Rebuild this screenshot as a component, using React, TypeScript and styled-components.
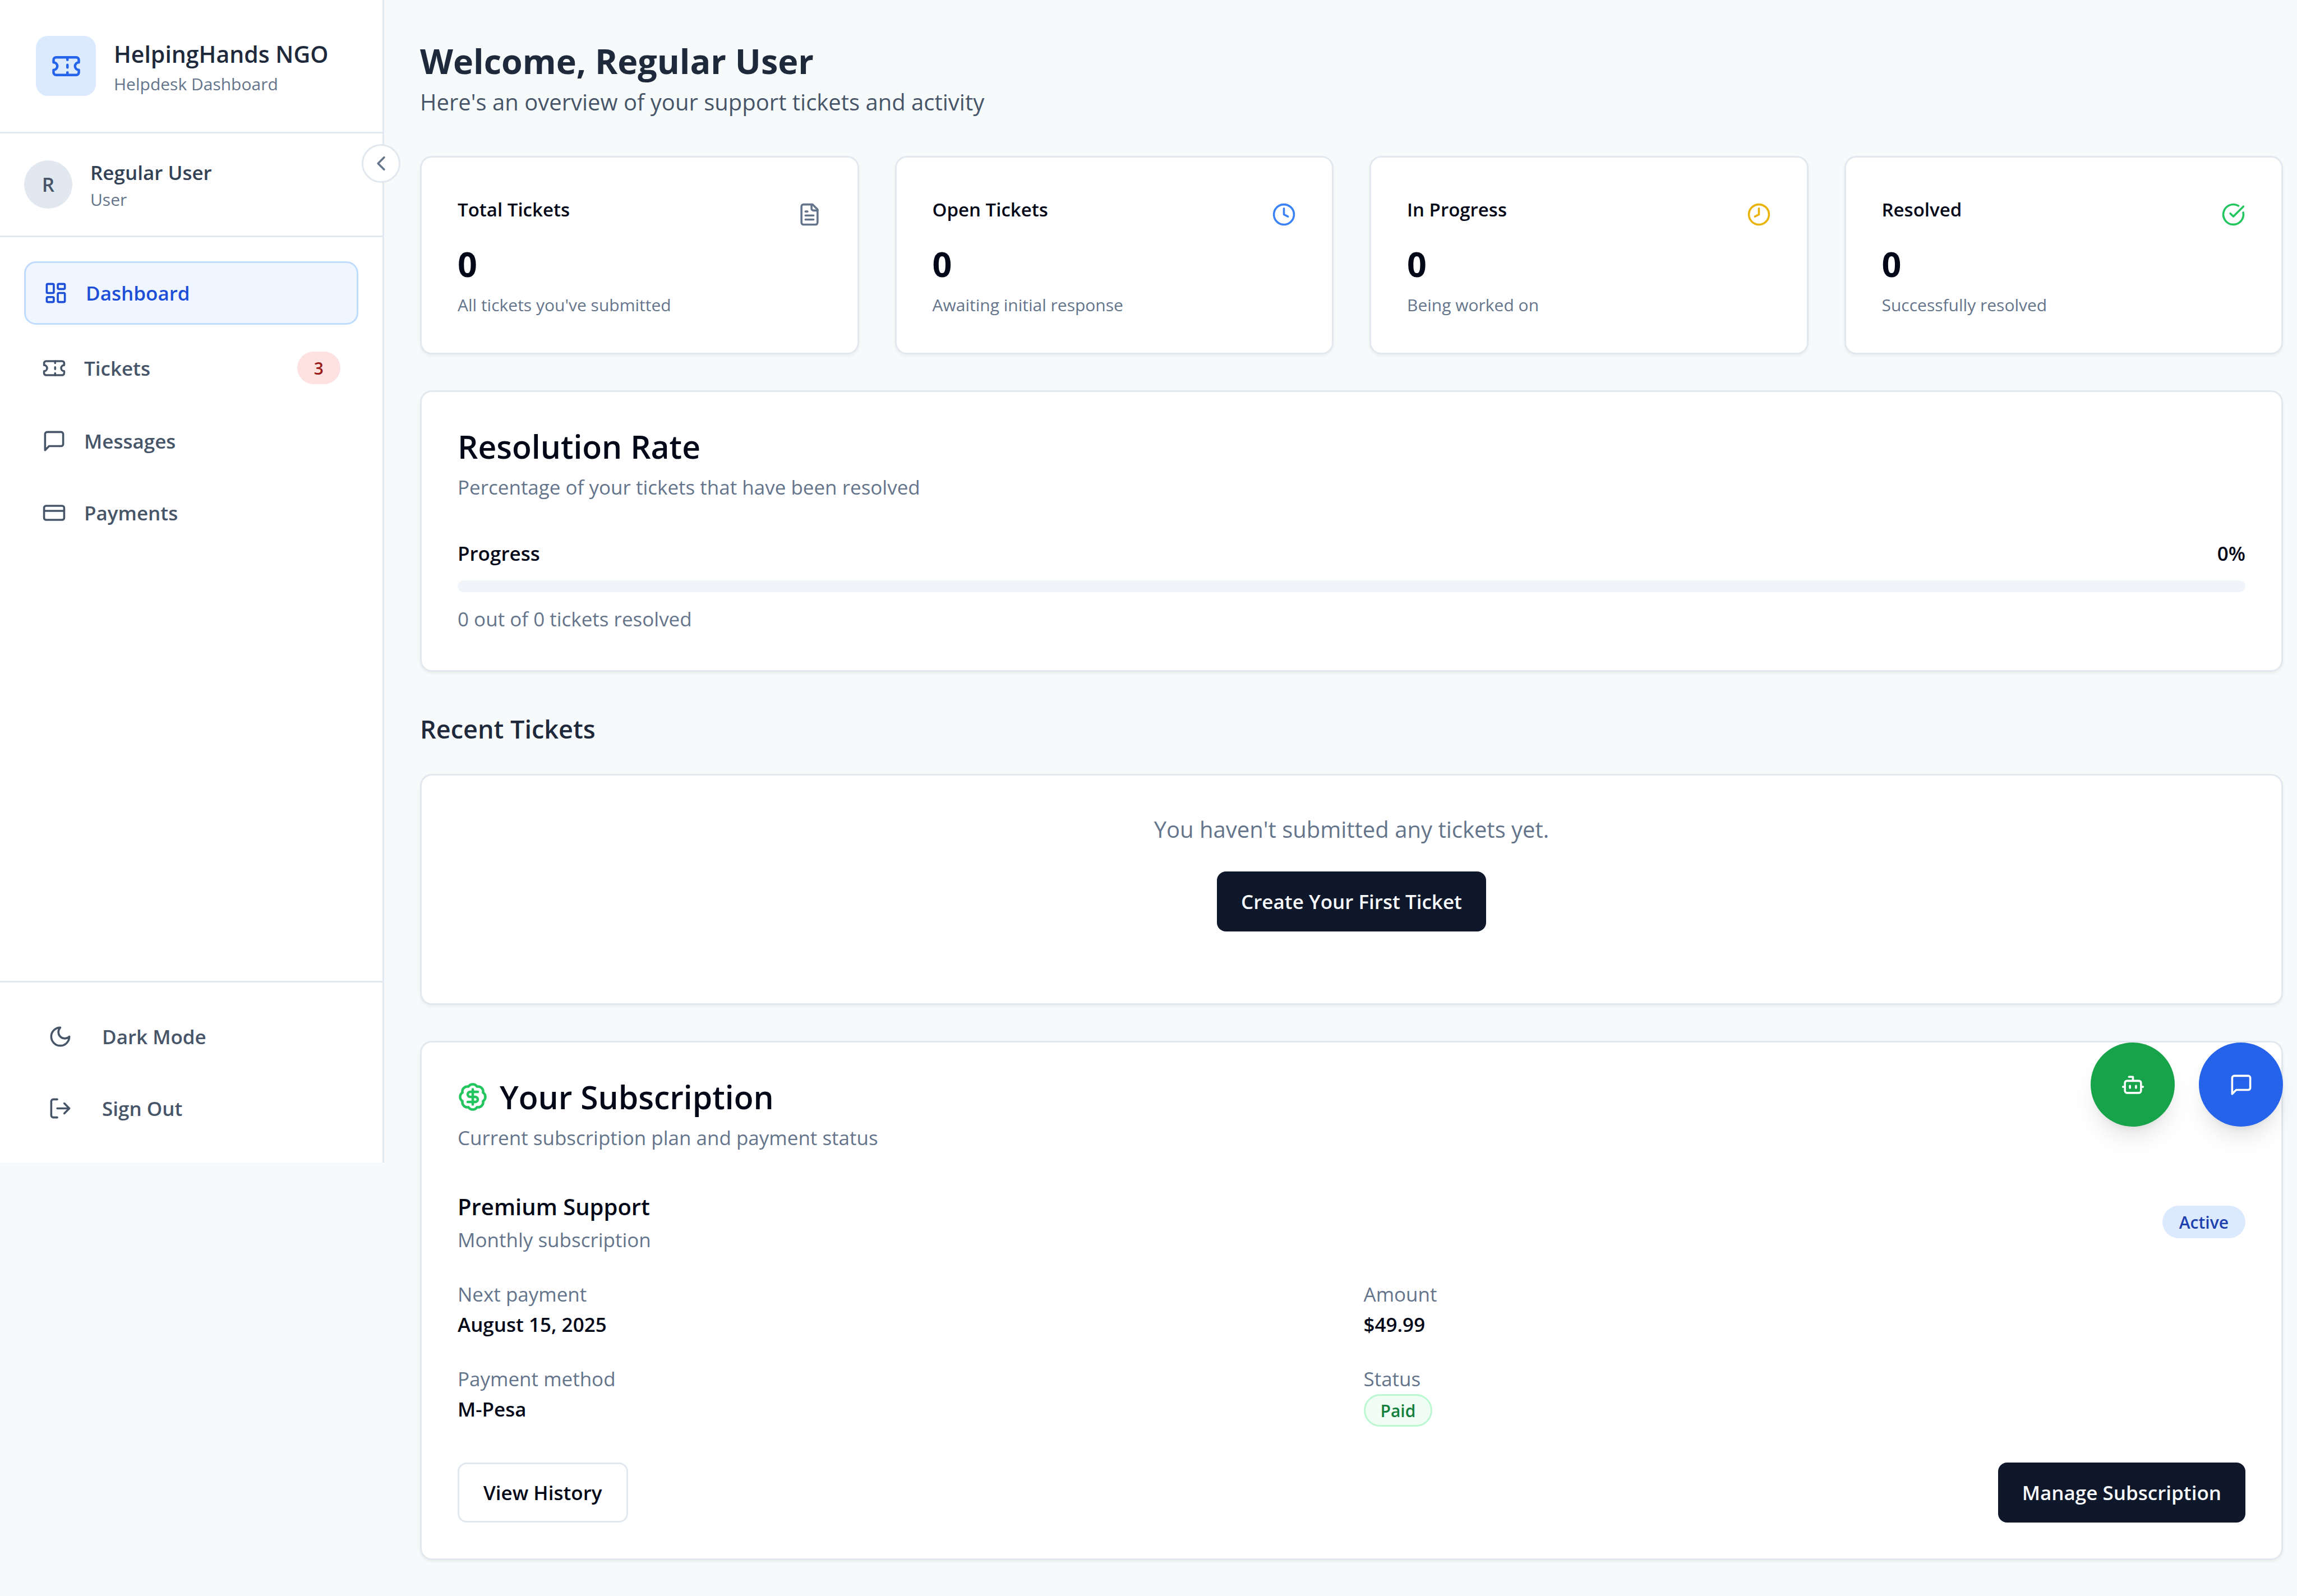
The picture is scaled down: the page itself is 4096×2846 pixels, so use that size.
import React from "react";
import styled, { createGlobalStyle } from "styled-components";

const border = "#e2e8f0";
const foreground = "#020817";
const muted = "#64748b";
const slate = "#475569";

const GlobalStyle = createGlobalStyle`
  *, *::before, *::after { box-sizing: border-box; }
  body {
    margin: 0;
    background: #f7fafb;
    color: ${foreground};
    font-family: "Open Sans", "Noto Sans", sans-serif;
    font-size: 35px;
    line-height: 54px;
  }
  h1, h2, h3, p, ul, dl, dd { margin: 0; padding: 0; }
  ul { list-style: none; }
  button { font: inherit; cursor: pointer; }
`;

/* ---------- icons ---------- */

const Svg = styled.svg<{ $size: number; $color?: string }>`
  flex: none;
  display: block;
  width: ${(p) => p.$size}px;
  height: ${(p) => p.$size}px;
  color: ${(p) => p.$color ?? "inherit"};
  fill: none;
  stroke: currentColor;
  stroke-width: 2;
  stroke-linecap: round;
  stroke-linejoin: round;
`;

const shapes = {
  ticket: (
    <>
      <path d="M2 9a3 3 0 0 1 0 6v2a2 2 0 0 0 2 2h16a2 2 0 0 0 2-2v-2a3 3 0 0 1 0-6V7a2 2 0 0 0-2-2H4a2 2 0 0 0-2 2Z" />
      <path d="M13 5v2M13 17v2M13 11v2" />
    </>
  ),
  dashboard: (
    <>
      <rect width="7" height="9" x="3" y="3" rx="1" />
      <rect width="7" height="5" x="14" y="3" rx="1" />
      <rect width="7" height="9" x="14" y="12" rx="1" />
      <rect width="7" height="5" x="3" y="16" rx="1" />
    </>
  ),
  message: <path d="M21 15a2 2 0 0 1-2 2H7l-4 4V5a2 2 0 0 1 2-2h14a2 2 0 0 1 2 2z" />,
  card: (
    <>
      <rect width="20" height="14" x="2" y="5" rx="2" />
      <path d="M2 10h20" />
    </>
  ),
  moon: <path d="M12 3a6 6 0 0 0 9 9 9 9 0 1 1-9-9Z" />,
  logout: (
    <>
      <path d="M9 21H5a2 2 0 0 1-2-2V5a2 2 0 0 1 2-2h4" />
      <path d="m16 17 5-5-5-5M21 12H9" />
    </>
  ),
  chevron: <path d="m15 18-6-6 6-6" />,
  file: (
    <>
      <path d="M15 2H6a2 2 0 0 0-2 2v16a2 2 0 0 0 2 2h12a2 2 0 0 0 2-2V7Z" />
      <path d="M14 2v4a2 2 0 0 0 2 2h4M10 9H8M16 13H8M16 17H8" />
    </>
  ),
  clock4: (
    <>
      <circle cx="12" cy="12" r="10" />
      <path d="M12 6v6l4 2" />
    </>
  ),
  clock8: (
    <>
      <circle cx="12" cy="12" r="10" />
      <path d="M12 6v6l-4 2" />
    </>
  ),
  check: (
    <>
      <path d="M21.801 10A10 10 0 1 1 17 3.335" />
      <path d="m9 11 3 3L22 4" />
    </>
  ),
  dollar: (
    <>
      <path d="M3.85 8.62a4 4 0 0 1 4.78-4.77 4 4 0 0 1 6.74 0 4 4 0 0 1 4.78 4.78 4 4 0 0 1 0 6.74 4 4 0 0 1-4.77 4.78 4 4 0 0 1-6.75 0 4 4 0 0 1-4.78-4.77 4 4 0 0 1 0-6.76Z" />
      <path d="M16 8h-6a2 2 0 1 0 0 4h4a2 2 0 1 1 0 4H8M12 18V6" />
    </>
  ),
  bot: (
    <>
      <path d="M12 8V4H8" />
      <rect width="16" height="12" x="4" y="8" rx="2" />
      <path d="M2 14h2M20 14h2M15 13v2M9 13v2" />
    </>
  ),
};

type IconName = keyof typeof shapes;

const Icon = ({ name, size = 43, color }: { name: IconName; size?: number; color?: string }) => (
  <Svg viewBox="0 0 24 24" aria-hidden="true" $size={size} $color={color}>
    {shapes[name]}
  </Svg>
);

/* ---------- sidebar ---------- */

const Shell = styled.div`
  display: flex;
  align-items: flex-start;
  min-height: 100vh;
`;

const Sidebar = styled.aside`
  position: relative;
  flex: none;
  width: 685px;
  background: #fff;
  border-right: 3px solid ${border};
`;

const Brand = styled.div`
  display: flex;
  align-items: center;
  gap: 32px;
  padding: 64px;
  border-bottom: 3px solid ${border};
`;

const BrandMark = styled.div`
  display: grid;
  place-items: center;
  width: 107px;
  height: 107px;
  border-radius: 21px;
  background: #dbeafe;
  color: #2563eb;
`;

const BrandName = styled.h2`
  font-size: 41px;
  line-height: 64px;
  font-weight: 600;
  color: #1e293b;
  white-space: nowrap;
`;

const SmallText = styled.p`
  font-size: 30px;
  line-height: 43px;
  color: ${muted};
`;

const Profile = styled.div`
  display: flex;
  align-items: center;
  gap: 32px;
  padding: 43px;
  border-bottom: 3px solid ${border};
`;

const Avatar = styled.div`
  display: grid;
  place-items: center;
  width: 86px;
  height: 86px;
  border-radius: 50%;
  background: ${border};
  color: ${slate};
  font-weight: 600;
`;

const ProfileName = styled.p`
  line-height: 53px;
  font-weight: 600;
  color: #334155;
`;

const CollapseButton = styled.button`
  position: absolute;
  top: 257px;
  right: -32px;
  display: grid;
  place-items: center;
  width: 69px;
  height: 69px;
  padding: 0;
  border: 3px solid ${border};
  border-radius: 50%;
  background: #fff;
  color: ${muted};
`;

const Nav = styled.nav`
  min-height: 1326px;
  padding: 43px;
`;

const NavList = styled.ul`
  display: flex;
  flex-direction: column;
  gap: 21px;
`;

const NavLink = styled.a<{ $active?: boolean }>`
  display: flex;
  align-items: center;
  gap: 32px;
  padding: 27px 32px;
  line-height: 53px;
  border: ${(p) => (p.$active ? "3px solid #bfdbfe" : "0")};
  border-radius: 21px;
  background: ${(p) => (p.$active ? "#eff6ff" : "transparent")};
  color: ${(p) => (p.$active ? "#1d4ed8" : slate)};
  font-weight: 600;
  text-decoration: none;
`;

const Pill = styled.span<{ $bg: string; $fg: string; $line?: string }>`
  display: inline-flex;
  align-items: center;
  height: 58px;
  padding: 0 27px;
  border: 3px solid ${(p) => p.$line ?? "transparent"};
  border-radius: 30px;
  background: ${(p) => p.$bg};
  color: ${(p) => p.$fg};
  font-size: 30px;
  line-height: 43px;
  font-weight: 600;
`;

const NavBadge = styled(Pill)`
  margin-left: auto;
`;

const SidebarFooter = styled.div`
  display: flex;
  flex-direction: column;
  gap: 21px;
  padding: 43px;
  border-top: 3px solid ${border};
`;

const FooterButton = styled.button`
  display: flex;
  align-items: center;
  gap: 53px;
  height: 107px;
  padding: 0 43px;
  border: 0;
  border-radius: 16px;
  background: transparent;
  color: ${slate};
  font-weight: 600;
`;

/* ---------- main ---------- */

const Main = styled.main`
  flex: 1;
  min-width: 0;
  padding: 64px 25px 64px 64px;
`;

const PageHeader = styled.header`
  margin-bottom: 64px;
`;

const PageTitle = styled.h1`
  padding-top: 4px;
  font-size: 61px;
  line-height: 82px;
  font-weight: 700;
  color: #1e293b;
`;

const BodyText = styled.p<{ $color: string }>`
  font-size: 40px;
  line-height: 64px;
  color: ${(p) => p.$color};
`;

const Card = styled.section`
  position: relative;
  padding: 64px;
  border: 3px solid ${border};
  border-radius: 21px;
  background: #fff;
  box-shadow: 0 3px 5px rgba(0, 0, 0, 0.05);
`;

const StatGrid = styled.div`
  display: grid;
  grid-template-columns: repeat(4, 1fr);
  gap: 64px;
  margin-bottom: 64px;
`;

const StatHead = styled.div`
  display: flex;
  align-items: flex-end;
  justify-content: space-between;
  height: 59px;
  margin-bottom: 24px;
`;

const StatTitle = styled.h3`
  align-self: flex-start;
  font-size: 33px;
  line-height: 57px;
  font-weight: 600;
`;

const StatValue = styled.p`
  margin-bottom: 8px;
  font-size: 61px;
  line-height: 86px;
  font-weight: 700;
`;

const SectionCard = styled(Card)`
  margin-bottom: 64px;
`;

const CardHead = styled.header`
  display: flex;
  flex-direction: column;
  gap: 13px;
  margin-bottom: 64px;
`;

const CardTitle = styled.h2`
  display: flex;
  align-items: center;
  gap: 21px;
  font-size: 57px;
  line-height: 66px;
  font-weight: 600;
`;

const Caption = styled.p`
  color: ${muted};
`;

const ProgressRow = styled.div`
  display: flex;
  justify-content: space-between;
  font-weight: 600;
`;

const ProgressTrack = styled.div`
  height: 21px;
  margin: 21px 0;
  border-radius: 11px;
  background: #f1f5f9;
  overflow: hidden;
`;

const ProgressFill = styled.div`
  height: 100%;
  background: #0f172a;
`;

const SectionTitle = styled.h2`
  margin-bottom: 43px;
  font-size: 45px;
  line-height: 75px;
  font-weight: 600;
  color: #1e293b;
`;

const EmptyState = styled.div`
  display: flex;
  flex-direction: column;
  align-items: center;
  gap: 43px;
  padding-bottom: 64px;
`;

const Button = styled.button<{ $outline?: boolean }>`
  height: 107px;
  padding: 0 43px;
  border: ${(p) => (p.$outline ? `3px solid ${border}` : "0")};
  border-radius: 16px;
  background: ${(p) => (p.$outline ? "#fff" : "#0f172a")};
  color: ${(p) => (p.$outline ? foreground : "#f8fafc")};
  font-weight: 600;
  white-space: nowrap;
`;

const PlanRow = styled.div`
  display: flex;
  align-items: center;
  justify-content: space-between;
  margin-bottom: 43px;
`;

const PlanName = styled.h3`
  font-size: 40px;
  line-height: 64px;
  font-weight: 600;
`;

const Details = styled.dl`
  display: grid;
  grid-template-columns: 1fr 1fr;
  gap: 43px;
  margin-bottom: 64px;
`;

const Term = styled.dt`
  color: ${muted};
`;

const Value = styled.dd`
  display: flex;
  font-weight: 600;
`;

const CardFooter = styled.footer`
  display: flex;
  justify-content: space-between;
`;

const FloatingActions = styled.div`
  position: absolute;
  top: 0;
  right: -3px;
  display: flex;
  gap: 43px;
`;

const RoundButton = styled.button<{ $bg: string }>`
  display: grid;
  place-items: center;
  width: 150px;
  height: 150px;
  padding: 0;
  border: 0;
  border-radius: 50%;
  background: ${(p) => p.$bg};
  color: #fff;
  box-shadow: 0 27px 40px -8px rgba(0, 0, 0, 0.1), 0 11px 16px -11px rgba(0, 0, 0, 0.1);
`;

/* ---------- data ---------- */

const navItems: { icon: IconName; label: string; active?: boolean; badge?: number }[] = [
  { icon: "dashboard", label: "Dashboard", active: true },
  { icon: "ticket", label: "Tickets", badge: 3 },
  { icon: "message", label: "Messages" },
  { icon: "card", label: "Payments" },
];

const stats: { title: string; value: number; note: string; icon: IconName; color: string }[] = [
  { title: "Total Tickets", value: 0, note: "All tickets you've submitted", icon: "file", color: muted },
  { title: "Open Tickets", value: 0, note: "Awaiting initial response", icon: "clock4", color: "#3b82f6" },
  { title: "In Progress", value: 0, note: "Being worked on", icon: "clock8", color: "#eab308" },
  { title: "Resolved", value: 0, note: "Successfully resolved", icon: "check", color: "#22c55e" },
];

const resolved = 0;
const total = 0;
const rate = total ? Math.round((resolved / total) * 100) : 0;

export default function App() {
  return (
    <>
      <GlobalStyle />
      <Shell>
        <Sidebar>
          <Brand>
            <BrandMark>
              <Icon name="ticket" size={54} />
            </BrandMark>
            <div>
              <BrandName>HelpingHands NGO</BrandName>
              <SmallText>Helpdesk Dashboard</SmallText>
            </div>
          </Brand>
          <Profile>
            <Avatar>R</Avatar>
            <div>
              <ProfileName>Regular User</ProfileName>
              <SmallText>User</SmallText>
            </div>
          </Profile>
          <Nav aria-label="Main">
            <NavList>
              {navItems.map((item) => (
                <li key={item.label}>
                  <NavLink href="#" $active={item.active} aria-current={item.active ? "page" : undefined}>
                    <Icon name={item.icon} />
                    {item.label}
                    {item.badge && (
                      <NavBadge $bg="#fee2e2" $fg="#991b1b">
                        {item.badge}
                      </NavBadge>
                    )}
                  </NavLink>
                </li>
              ))}
            </NavList>
          </Nav>
          <SidebarFooter>
            <FooterButton type="button">
              <Icon name="moon" />
              Dark Mode
            </FooterButton>
            <FooterButton type="button">
              <Icon name="logout" />
              Sign Out
            </FooterButton>
          </SidebarFooter>
          <CollapseButton type="button" aria-label="Collapse sidebar">
            <Icon name="chevron" />
          </CollapseButton>
        </Sidebar>

        <Main>
          <PageHeader>
            <PageTitle>Welcome, Regular User</PageTitle>
            <BodyText $color={slate}>Here's an overview of your support tickets and activity</BodyText>
          </PageHeader>

          <StatGrid>
            {stats.map((s) => (
              <Card key={s.title}>
                <StatHead>
                  <StatTitle>{s.title}</StatTitle>
                  <Icon name={s.icon} color={s.color} />
                </StatHead>
                <StatValue>{s.value}</StatValue>
                <SmallText>{s.note}</SmallText>
              </Card>
            ))}
          </StatGrid>

          <SectionCard>
            <CardHead>
              <CardTitle>Resolution Rate</CardTitle>
              <Caption>Percentage of your tickets that have been resolved</Caption>
            </CardHead>
            <ProgressRow>
              <span>Progress</span>
              <span>{rate}%</span>
            </ProgressRow>
            <ProgressTrack role="progressbar" aria-label="Progress" aria-valuenow={rate} aria-valuemin={0} aria-valuemax={100}>
              <ProgressFill style={{ width: `${rate}%` }} />
            </ProgressTrack>
            <Caption>
              {resolved} out of {total} tickets resolved
            </Caption>
          </SectionCard>

          <SectionTitle>Recent Tickets</SectionTitle>
          <SectionCard>
            <EmptyState>
              <BodyText $color={muted}>You haven't submitted any tickets yet.</BodyText>
              <Button type="button">Create Your First Ticket</Button>
            </EmptyState>
          </SectionCard>

          <Card>
            <CardHead>
              <CardTitle>
                <Icon name="dollar" size={54} color="#22c55e" />
                Your Subscription
              </CardTitle>
              <Caption>Current subscription plan and payment status</Caption>
            </CardHead>
            <PlanRow>
              <div>
                <PlanName>Premium Support</PlanName>
                <Caption>Monthly subscription</Caption>
              </div>
              <Pill $bg="#dbeafe" $fg="#1e40af">
                Active
              </Pill>
            </PlanRow>
            <Details>
              <div>
                <Term>Next payment</Term>
                <Value>August 15, 2025</Value>
              </div>
              <div>
                <Term>Amount</Term>
                <Value>$49.99</Value>
              </div>
              <div>
                <Term>Payment method</Term>
                <Value>M-Pesa</Value>
              </div>
              <div>
                <Term>Status</Term>
                <Value>
                  <Pill $bg="#f0fdf4" $fg="#15803d" $line="#bbf7d0">
                    Paid
                  </Pill>
                </Value>
              </div>
            </Details>
            <CardFooter>
              <Button type="button" $outline>
                View History
              </Button>
              <Button type="button">Manage Subscription</Button>
            </CardFooter>
            <FloatingActions>
              <RoundButton type="button" aria-label="Open assistant" $bg="#16a34a">
                <Icon name="bot" />
              </RoundButton>
              <RoundButton type="button" aria-label="Open chat" $bg="#2563eb">
                <Icon name="message" />
              </RoundButton>
            </FloatingActions>
          </Card>
        </Main>
      </Shell>
    </>
  );
}
